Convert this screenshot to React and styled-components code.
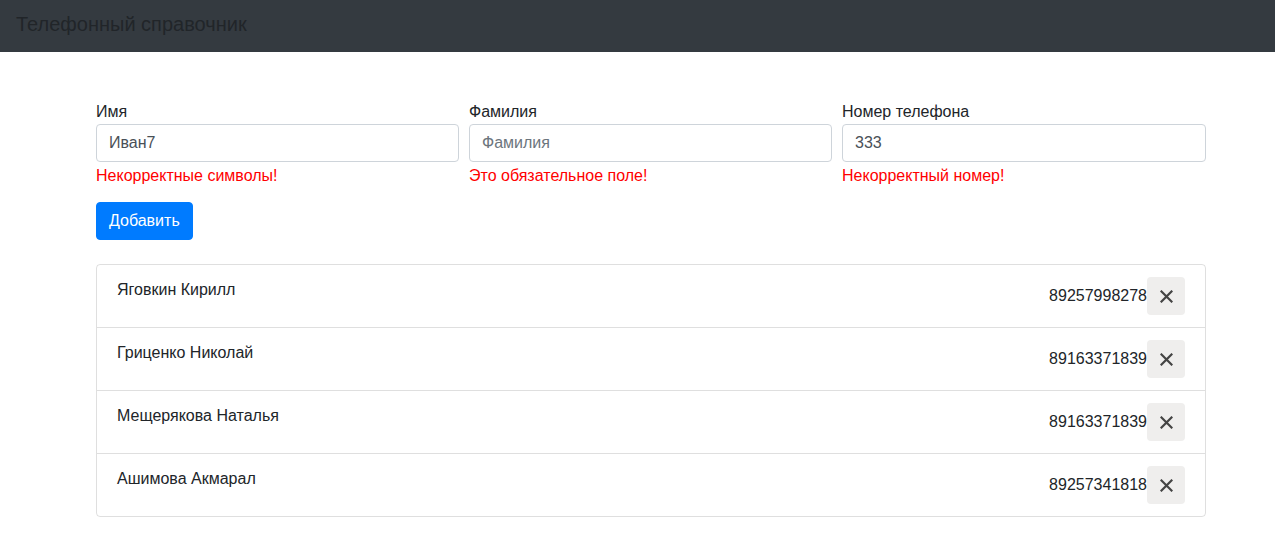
import styled, { createGlobalStyle } from "styled-components";

const contacts = [
  { name: "Яговкин Кирилл", phone: "89257998278" },
  { name: "Гриценко Николай", phone: "89163371839" },
  { name: "Мещерякова Наталья", phone: "89163371839" },
  { name: "Ашимова Акмарал", phone: "89257341818" },
];

const fields = [
  { label: "Имя", value: "Иван7", placeholder: "Имя", error: "Некорректные символы!" },
  { label: "Фамилия", value: "", placeholder: "Фамилия", error: "Это обязательное поле!" },
  { label: "Номер телефона", value: "333", placeholder: "Номер телефона", error: "Некорректный номер!" },
];

const GlobalStyle = createGlobalStyle`
  body {
    margin: 0;
    font-family: "Liberation Sans", Arial, sans-serif;
    font-size: 16px;
    line-height: 1.5;
    color: #212529;
    background: #fff;
  }
  * { box-sizing: border-box; }
`;

export default function App() {
  return (
    <>
      <GlobalStyle />
      <Navbar>
        <Brand>Телефонный справочник</Brand>
      </Navbar>
      <Container>
        <FormRow>
          {fields.map((f) => (
            <Field key={f.label}>
              <Label>{f.label}</Label>
              <Input defaultValue={f.value} placeholder={f.placeholder} />
              <Error>{f.error}</Error>
            </Field>
          ))}
        </FormRow>
        <AddButton>Добавить</AddButton>
        <List>
          {contacts.map((c, i) => (
            <Item key={i}>
              <Name>{c.name}</Name>
              <Right>
                <Phone>{c.phone}</Phone>
                <CloseBtn aria-label="delete">
                  <svg width="13" height="13" viewBox="0 0 13 13">
                    <path d="M1.5 1.5 L11.5 11.5 M11.5 1.5 L1.5 11.5" stroke="#444" strokeWidth="2.2" strokeLinecap="square" />
                  </svg>
                </CloseBtn>
              </Right>
            </Item>
          ))}
        </List>
      </Container>
    </>
  );
}

const Navbar = styled.nav`
  height: 52px;
  background: #343a40;
  display: flex;
  align-items: center;
  padding: 0 16px 4px;
`;
const Brand = styled.span`
  font-size: 20px;
  color: #212529;
`;
const Container = styled.main`
  width: 1110px;
  margin-left: 96px;
  padding-top: 48px;
`;
const FormRow = styled.div`
  display: grid;
  grid-template-columns: 363px 363px 364px;
  gap: 10px;
`;
const Field = styled.div`
  display: flex;
  flex-direction: column;
`;
const Label = styled.label`
  line-height: 24px;
`;
const Input = styled.input`
  height: 38px;
  padding: 6px 12px;
  font: inherit;
  color: #495057;
  border: 1px solid #ced4da;
  border-radius: 4px;
  outline: none;
  &::placeholder { color: #6c757d; }
`;
const Error = styled.div`
  color: #ff0000;
  line-height: 24px;
  margin-top: 2px;
  margin-bottom: -1px;
`;
const AddButton = styled.button`
  margin-top: 15px;
  height: 38px;
  padding: 6px 12px;
  font: inherit;
  color: #fff;
  background: #007bff;
  border: 1px solid #007bff;
  border-radius: 4px;
`;
const List = styled.ul`
  list-style: none;
  margin: 24px 0 0;
  padding: 0;
  border: 1px solid rgba(0, 0, 0, 0.125);
  border-radius: 4px;
`;
const Item = styled.li`
  display: flex;
  justify-content: space-between;
  padding: 12px 20px;
  & + & { border-top: 1px solid rgba(0, 0, 0, 0.125); }
`;
const Name = styled.span`
  line-height: 24px;
  padding-top: 1px;
`;
const Right = styled.div`
  display: flex;
  align-items: center;
`;
const Phone = styled.span``;
const CloseBtn = styled.button`
  width: 38px;
  height: 38px;
  border: none;
  border-radius: 4px;
  background: #efeeed;
  display: flex;
  align-items: center;
  justify-content: center;
  padding: 0;
`;
